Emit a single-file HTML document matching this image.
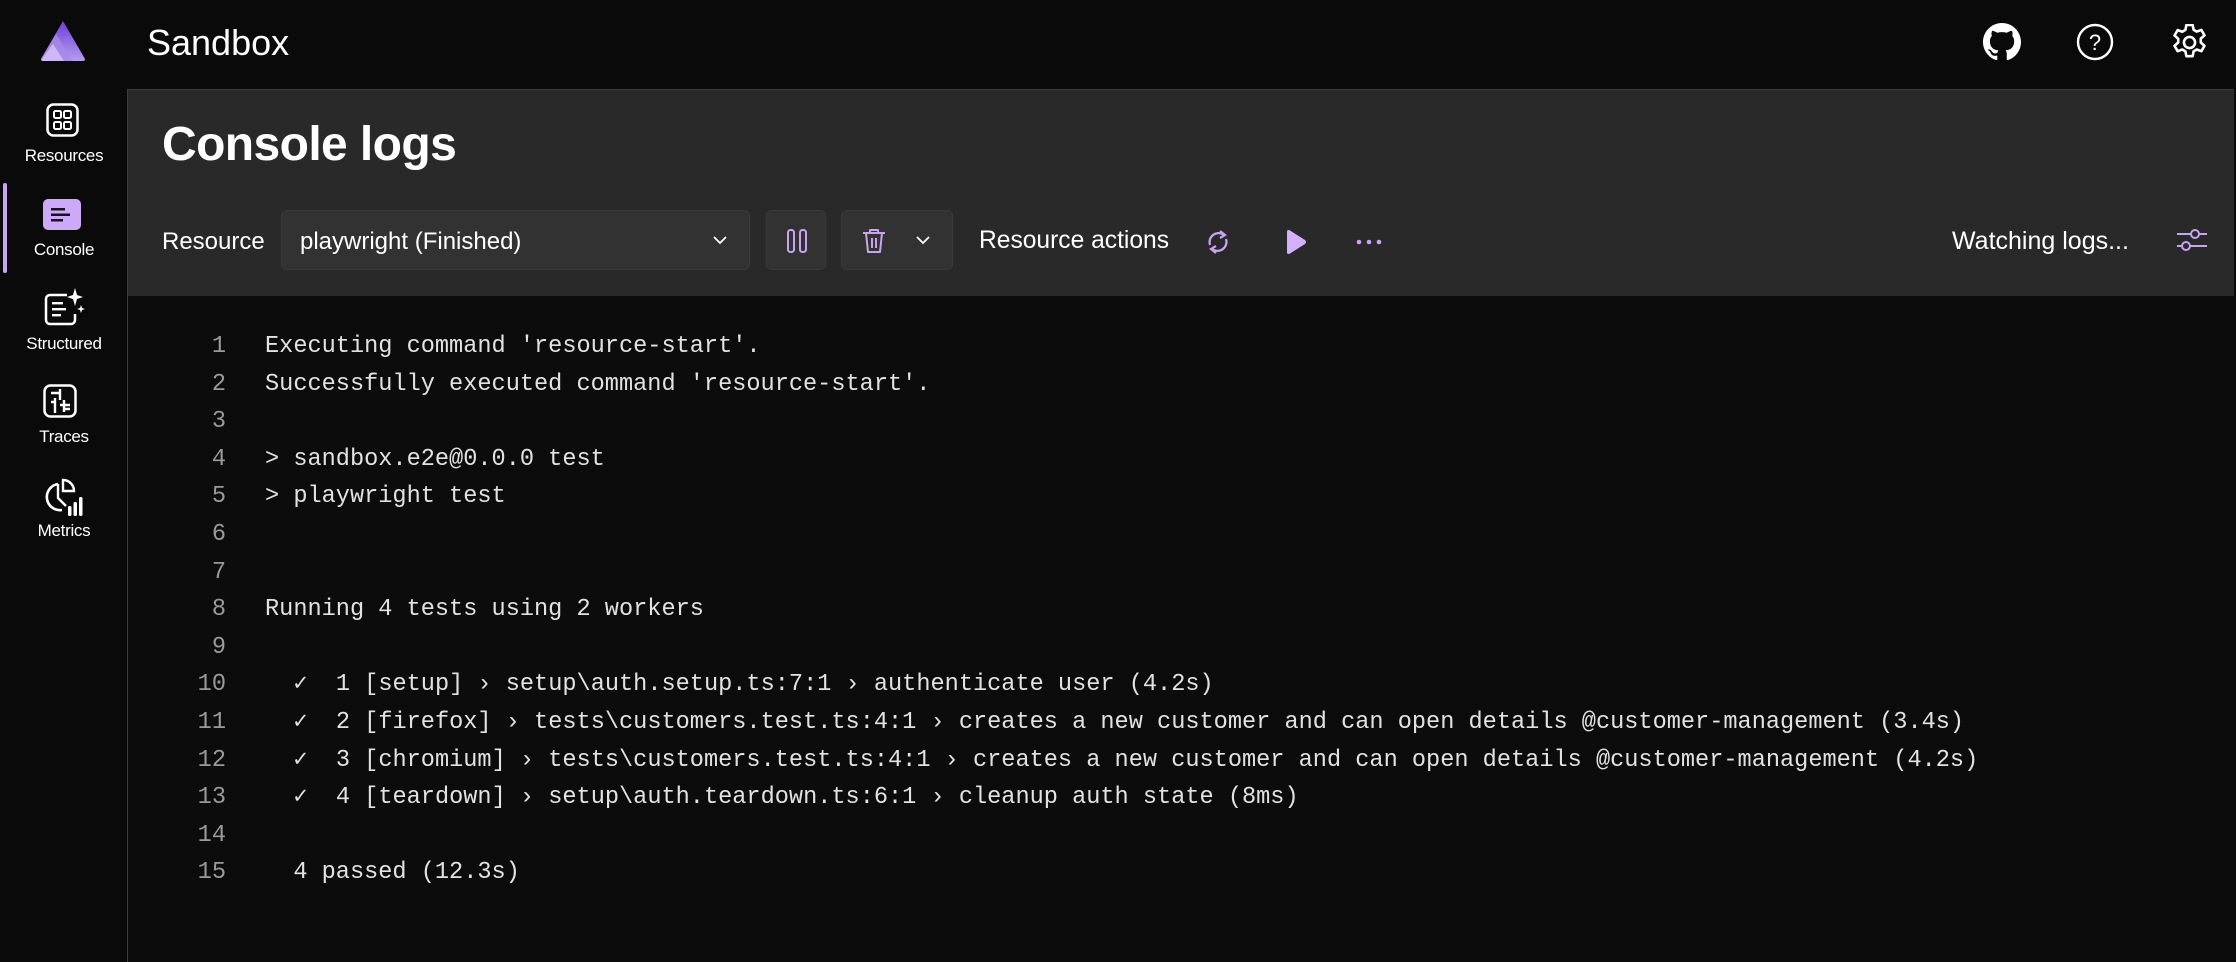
<!DOCTYPE html>
<html><head><meta charset="utf-8"><style>
*{box-sizing:border-box;margin:0;padding:0}
body{width:2236px;height:962px;background:#0a0a0a;font-family:"Liberation Sans",sans-serif;color:#fff;position:relative;overflow:hidden}
.abs{position:absolute}
.lbl{position:absolute;width:128px;left:0;text-align:center;font-size:17px;color:#fff;letter-spacing:-0.3px}
.panel{position:absolute;left:127px;top:89px;right:2px;bottom:0;background:#0c0c0c;border-left:1px solid #3c3c3c;border-top:1px solid #3c3c3c}
.tool{position:absolute;left:0;top:0;right:0;height:206px;background:#292929}
.btn{position:absolute;top:120px;height:60px;background:#323232;border:1px solid #3a3a3a;border-radius:6px}
.log{position:absolute;left:0;top:238px;font-family:"Liberation Mono",monospace;font-size:23.6px;line-height:37.6px;white-space:pre}
.ln{position:absolute;left:0;width:98px;text-align:right;color:#9a9a9a}
.tx{position:absolute;left:137px;color:#e2e2e2}
</style></head><body>
<svg class="abs" style="left:40px;top:20px" width="46" height="41" viewBox="0 0 46 41">
<defs><linearGradient id="g" x1="0" y1="0" x2="0" y2="1"><stop offset="0" stop-color="#6b3fd8"/><stop offset="1" stop-color="#b79cf0"/></linearGradient></defs>
<path d="M23 1 L45 39 Q45 41 43 41 L3 41 Q1 41 1 39 Z" fill="url(#g)"/>
<path d="M16 14 L33 41 L3 41 Q1 41 1 39 Z" fill="#a88ae8" opacity=".8"/>
<path d="M13 24 L24 41 L3 41 Q1 41 2 39 Z" fill="#cdb8f5"/>
</svg>
<div class="abs" style="left:147px;top:22px;font-size:36px">Sandbox</div>
<svg class="abs" style="left:1983px;top:23px" width="38" height="38" viewBox="0 0 16 16"><path fill="#fff" d="M8 0C3.58 0 0 3.58 0 8c0 3.540 2.29 6.53 5.470 7.59.4.07.55-.17.55-.38 0-.19-.01-.82-.01-1.49-2.010.37-2.530-.49-2.690-.94-.09-.23-.48-.94-.82-1.130-.28-.15-.68-.52-.01-.53.63-.01 1.08.58 1.23.82.72 1.21 1.87.87 2.33.66.07-.52.28-.87.51-1.070-1.78-.2-3.64-.89-3.64-3.95 0-.87.31-1.59.82-2.15-.08-.2-.36-1.02.08-2.12 0 0 .67-.21 2.2.82.64-.18 1.32-.27 2-.27.68 0 1.36.09 2 .27 1.53-1.04 2.2-.82 2.2-.82.44 1.1.16 1.92.08 2.12.51.56.82 1.27.82 2.15 0 3.07-1.87 3.75-3.65 3.95.29.25.54.73.54 1.48 0 1.07-.01 1.93-.01 2.2 0 .21.15.46.55.38A8.013 8.013 0 0016 8c0-4.42-3.58-8-8-8z"/></svg>
<svg class="abs" style="left:2076px;top:23px" width="38" height="38" viewBox="0 0 38 38"><circle cx="19" cy="19" r="17" fill="none" stroke="#fff" stroke-width="2.4"/><text x="19" y="27" text-anchor="middle" font-family="Liberation Sans" font-size="22" fill="#fff">?</text></svg>
<svg class="abs" style="left:2171px;top:24px" width="37" height="37" viewBox="2 2 20 20"><path fill="none" stroke="#fff" stroke-width="1.4" stroke-linejoin="round" d="M10.3 2.5h3.4l.5 2.6 1.7 1 2.5-.9 1.7 2.9-2 1.8v2.1l2 1.8-1.7 2.9-2.5-.9-1.7 1-.5 2.6h-3.4l-.5-2.6-1.7-1-2.5.9-1.7-2.9 2-1.8V10l-2-1.8 1.7-2.9 2.5.9 1.7-1z"/><circle cx="12" cy="12" r="3" fill="none" stroke="#fff" stroke-width="1.4"/></svg>
<svg class="abs" style="left:46px;top:103px" width="33" height="34" viewBox="0 0 33 34"><rect x="1.5" y="1.5" width="30" height="31" rx="6" fill="none" stroke="#fff" stroke-width="2.5"/><rect x="8" y="8" width="7" height="7" rx="1.5" fill="none" stroke="#fff" stroke-width="2"/><rect x="18" y="8" width="7" height="7" rx="1.5" fill="none" stroke="#fff" stroke-width="2"/><rect x="8" y="19" width="7" height="7" rx="1.5" fill="none" stroke="#fff" stroke-width="2"/><rect x="18" y="19" width="7" height="7" rx="1.5" fill="none" stroke="#fff" stroke-width="2"/></svg>
<div class="lbl" style="top:146px">Resources</div>
<div class="abs" style="left:3px;top:183px;width:4px;height:90px;background:#c4a6f2;border-radius:2px"></div>
<svg class="abs" style="left:43px;top:199px" width="38" height="31" viewBox="0 0 38 31"><rect width="38" height="31" rx="5" fill="#cdaaf7"/><rect x="8" y="9" width="14" height="2.5" fill="#1a1020"/><rect x="8" y="14.5" width="19" height="2.5" fill="#1a1020"/><rect x="8" y="20" width="12" height="2.5" fill="#1a1020"/></svg>
<div class="lbl" style="top:240px">Console</div>
<svg class="abs" style="left:43px;top:288px" width="42" height="40" viewBox="0 0 42 40"><path d="M24 7H7a4 4 0 0 0-4 4v21a4 4 0 0 0 4 4h21a4 4 0 0 0 4-4v-6" fill="none" stroke="#fff" stroke-width="2.5"/><rect x="9" y="14" width="11" height="2.4" fill="#fff"/><rect x="9" y="20" width="14" height="2.4" fill="#fff"/><rect x="9" y="26" width="9" height="2.4" fill="#fff"/><path d="M32 0l2 7 6 2-6 2-2 7-2-7-6-2 6-2z" fill="#fff"/><path d="M38 17l1 3 3 1-3 1-1 3-1-3-3-1 3-1z" fill="#fff"/></svg>
<div class="lbl" style="top:334px">Structured</div>
<svg class="abs" style="left:43px;top:384px" width="34" height="34" viewBox="0 0 34 34"><rect x="1.5" y="1.5" width="31" height="31" rx="6" fill="none" stroke="#fff" stroke-width="2.5"/><path d="M8 9h9M17 5v11M12 14v15M12 18h-4M17 21h10M21 16v12M21 25h6" fill="none" stroke="#fff" stroke-width="2.4"/></svg>
<div class="lbl" style="top:427px">Traces</div>
<svg class="abs" style="left:44px;top:478px" width="40" height="40" viewBox="0 0 40 40"><path d="M14 6A13 13 0 0 0 18 32" fill="none" stroke="#fff" stroke-width="2.6"/><path d="M19 2a11 11 0 0 1 11 11H19z" fill="none" stroke="#fff" stroke-width="2.4"/><path d="M14 6v14l8 8" fill="none" stroke="#fff" stroke-width="2.4"/><rect x="24" y="28" width="3.5" height="10" rx="1.5" fill="#fff"/><rect x="29.5" y="24" width="3.5" height="14" rx="1.5" fill="#fff"/><rect x="35" y="19" width="3.5" height="19" rx="1.5" fill="#fff"/></svg>
<div class="lbl" style="top:521px">Metrics</div>
<div class="panel">
<div class="tool">
<div class="abs" style="left:34px;top:27px;font-size:48px;font-weight:bold;letter-spacing:-0.6px">Console logs</div>
<div class="abs" style="left:34px;top:138px;font-size:24px">Resource</div>
<div class="btn" style="left:153px;width:469px"><div class="abs" style="left:18px;top:17px;font-size:24px">playwright (Finished)</div>
<svg class="abs" style="left:430px;top:24px" width="16" height="10" viewBox="0 0 16 10"><path d="M2 2l6 6 6-6" fill="none" stroke="#fff" stroke-width="1.8"/></svg></div>
<div class="btn" style="left:638px;width:60px"><svg class="abs" style="left:17px;top:17px" width="26" height="26" viewBox="0 0 26 26"><rect x="4" y="2" width="6" height="22" rx="2.5" fill="none" stroke="#c7a4f0" stroke-width="2"/><rect x="16" y="2" width="6" height="22" rx="2.5" fill="none" stroke="#c7a4f0" stroke-width="2"/></svg></div>
<div class="btn" style="left:713px;width:112px"><svg class="abs" style="left:19px;top:16px" width="26" height="28" viewBox="0 0 26 28"><path d="M2 6h22M9 6V3h8v3M5 6l2 19h12l2-19M11 11v10M15 11v10" fill="none" stroke="#c7a4f0" stroke-width="2" stroke-linejoin="round"/></svg>
<svg class="abs" style="left:73px;top:24px" width="16" height="10" viewBox="0 0 16 10"><path d="M2 2l6 6 6-6" fill="none" stroke="#fff" stroke-width="1.8"/></svg></div>
<div class="abs" style="left:851px;top:137px;font-size:24.6px">Resource actions</div>
<svg class="abs" style="left:1077px;top:138px" width="26" height="28" viewBox="0 0 26 28"><path d="M5 17A9 9 0 0 1 19 7M21 11A9 9 0 0 1 7 21" fill="none" stroke="#c7a4f0" stroke-width="2.2"/><path d="M15 3l5 4-5 3M11 25l-5-4 5-3" fill="none" stroke="#c7a4f0" stroke-width="2.2"/></svg>
<svg class="abs" style="left:1157px;top:139px" width="22" height="26" viewBox="0 0 22 26"><path d="M2 3Q2 0 5 1.5L20 11Q22 13 20 15L5 24.5Q2 26 2 23z" fill="#d4b0fa"/></svg>
<svg class="abs" style="left:1228px;top:148px" width="26" height="8" viewBox="0 0 26 8"><circle cx="3" cy="4" r="2.3" fill="#c7a4f0"/><circle cx="13" cy="4" r="2.3" fill="#c7a4f0"/><circle cx="23" cy="4" r="2.3" fill="#c7a4f0"/></svg>
<div class="abs" style="left:1824px;top:137px;font-size:25px">Watching logs...</div>
<svg class="abs" style="left:2048px;top:139px" width="31" height="22" viewBox="0 0 31 22"><path d="M1 5h30M1 17h30" stroke="#c7a4f0" stroke-width="2"/><circle cx="19" cy="5" r="4" fill="#292929" stroke="#c7a4f0" stroke-width="2"/><circle cx="10" cy="17" r="4" fill="#292929" stroke="#c7a4f0" stroke-width="2"/></svg>
</div>
<div class="log">
<div class="ln" style="top:0">1</div><div class="tx" style="top:0">Executing command 'resource-start'.</div>
<div class="ln" style="top:37.6px">2</div><div class="tx" style="top:37.6px">Successfully executed command 'resource-start'.</div>
<div class="ln" style="top:75.2px">3</div>
<div class="ln" style="top:112.8px">4</div><div class="tx" style="top:112.8px">&gt; sandbox.e2e@0.0.0 test</div>
<div class="ln" style="top:150.4px">5</div><div class="tx" style="top:150.4px">&gt; playwright test</div>
<div class="ln" style="top:188px">6</div>
<div class="ln" style="top:225.6px">7</div>
<div class="ln" style="top:263.2px">8</div><div class="tx" style="top:263.2px">Running 4 tests using 2 workers</div>
<div class="ln" style="top:300.8px">9</div>
<div class="ln" style="top:338.4px">10</div><div class="tx" style="top:338.4px">  ✓  1 [setup] › setup\auth.setup.ts:7:1 › authenticate user (4.2s)</div>
<div class="ln" style="top:376px">11</div><div class="tx" style="top:376px">  ✓  2 [firefox] › tests\customers.test.ts:4:1 › creates a new customer and can open details @customer-management (3.4s)</div>
<div class="ln" style="top:413.6px">12</div><div class="tx" style="top:413.6px">  ✓  3 [chromium] › tests\customers.test.ts:4:1 › creates a new customer and can open details @customer-management (4.2s)</div>
<div class="ln" style="top:451.2px">13</div><div class="tx" style="top:451.2px">  ✓  4 [teardown] › setup\auth.teardown.ts:6:1 › cleanup auth state (8ms)</div>
<div class="ln" style="top:488.8px">14</div>
<div class="ln" style="top:526.4px">15</div><div class="tx" style="top:526.4px">  4 passed (12.3s)</div>
</div>
</div>
</body></html>
